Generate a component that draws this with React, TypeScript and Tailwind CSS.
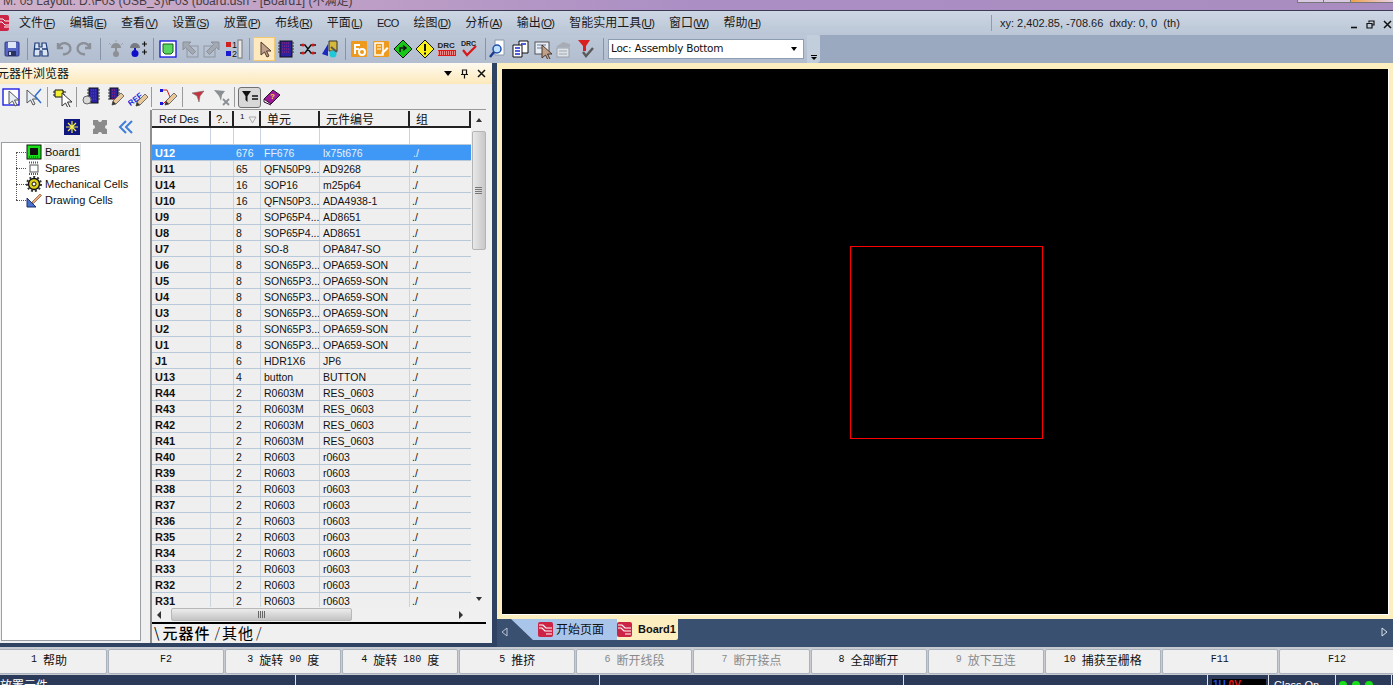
import React from "react";

const CJK = '"Liberation Sans","Noto Sans CJK SC",sans-serif';

const rows: [string, string, string, string][] = [
  ["U11", "65", "QFN50P9...", "AD9268"],
  ["U14", "16", "SOP16", "m25p64"],
  ["U10", "16", "QFN50P3...", "ADA4938-1"],
  ["U9", "8", "SOP65P4...", "AD8651"],
  ["U8", "8", "SOP65P4...", "AD8651"],
  ["U7", "8", "SO-8", "OPA847-SO"],
  ["U6", "8", "SON65P3...", "OPA659-SON"],
  ["U5", "8", "SON65P3...", "OPA659-SON"],
  ["U4", "8", "SON65P3...", "OPA659-SON"],
  ["U3", "8", "SON65P3...", "OPA659-SON"],
  ["U2", "8", "SON65P3...", "OPA659-SON"],
  ["U1", "8", "SON65P3...", "OPA659-SON"],
  ["J1", "6", "HDR1X6", "JP6"],
  ["U13", "4", "button", "BUTTON"],
  ["R44", "2", "R0603M", "RES_0603"],
  ["R43", "2", "R0603M", "RES_0603"],
  ["R42", "2", "R0603M", "RES_0603"],
  ["R41", "2", "R0603M", "RES_0603"],
  ["R40", "2", "R0603", "r0603"],
  ["R39", "2", "R0603", "r0603"],
  ["R38", "2", "R0603", "r0603"],
  ["R37", "2", "R0603", "r0603"],
  ["R36", "2", "R0603", "r0603"],
  ["R35", "2", "R0603", "r0603"],
  ["R34", "2", "R0603", "r0603"],
  ["R33", "2", "R0603", "r0603"],
  ["R32", "2", "R0603", "r0603"],
  ["R31", "2", "R0603", "r0603"],
];

const menus: [string, string][] = [
  ["文件", "F"], ["编辑", "E"], ["查看", "V"], ["设置", "S"], ["放置", "P"], ["布线", "R"], ["平面", "L"],
  ["", "ECO"], ["绘图", "D"], ["分析", "A"], ["输出", "O"], ["智能实用工具", "U"], ["窗口", "W"], ["帮助", "H"],
];

const fkeys: [string, boolean][] = [
  ["1 帮助", true], ["F2", true], ["3 旋转 90 度", true], ["4 旋转 180 度", true], ["5 推挤", true], ["6 断开线段", false],
  ["7 断开接点", false], ["8 全部断开", true], ["9 放下互连", false], ["10 捕获至栅格", true], ["F11", true], ["F12", true],
];

function Ico({ children }: { children: React.ReactNode }) {
  return <svg width="20" height="20" viewBox="0 0 20 20" className="shrink-0">{children}</svg>;
}
function Slot({ children, active }: { children: React.ReactNode; active?: boolean }) {
  return (
    <div className={active ? "w-[22px] h-[24px] flex items-center justify-center bg-[#fde9bd] border border-[#f2c872]" : "w-[22px] h-[24px] flex items-center justify-center"}>
      {children}
    </div>
  );
}
const Cursor = ({ x = 0, y = 0, fill = "#ffffff", stroke = "#444" }: any) => (
  <path transform={`translate(${x} ${y})`} d="M4 1 L4 14 L7.5 11 L10 16 L12 15 L9.5 10 L14 10 Z" fill={fill} stroke={stroke} strokeWidth="1" />
);
const Chip = ({ x = 4, y = 2, w = 11, h = 15 }: any) => (
  <g>
    <rect x={x} y={y} width={w} height={h} fill="#2a22a0" stroke="#111" />
    <path d={`M${x + 2} ${y + 2}h${w - 4}M${x + 2} ${y + 5}h${w - 4}M${x + 2} ${y + 8}h${w - 4}M${x + 2} ${y + 11}h${w - 4}`} stroke="#b0286a" strokeDasharray="1 1" />
    <path d={`M${x - 2} ${y + 2}h2M${x - 2} ${y + 5}h2M${x - 2} ${y + 8}h2M${x - 2} ${y + 11}h2M${x + w} ${y + 2}h2M${x + w} ${y + 5}h2M${x + w} ${y + 8}h2M${x + w} ${y + 11}h2`} stroke="#333" />
  </g>
);
const Pencil = ({ x = 0, y = 0 }: any) => (
  <g transform={`translate(${x} ${y})`}>
    <path d="M7 16 L8 12 L16 4 L19 7 L11 15 Z" fill="#e8c79a" stroke="#555" strokeWidth="0.8" />
    <path d="M7 16 L8 12 L11 15 Z" fill="#333" />
  </g>
);
const RedBoard = () => (
  <div className="w-[15px] h-[15px] rounded-[2px] bg-[#cc2444] flex items-center justify-center shrink-0">
    <svg width="13" height="13" viewBox="0 0 13 13"><path d="M0 2H4L7 5H13M0 5H3L6 8H13M7 11H13" stroke="#fff" strokeWidth="1.2" fill="none" /></svg>
  </div>
);

function MainToolbar() {
  return (
    <div className="h-[28px] w-[820px] bg-gradient-to-b from-[#bcc8d8] to-[#b2becf] flex items-center pl-px rounded-br-[4px]">
      <Slot><Ico><rect x="3" y="3" width="14" height="14" rx="1" fill="#5566c4" stroke="#333a80" /><rect x="6" y="3" width="8" height="6" fill="#dfe6f5" /><rect x="6" y="12" width="8" height="5" fill="#2a3060" /><rect x="7" y="13" width="2" height="3" fill="#c8d0e8" /></Ico></Slot>
      <div className="w-px h-[22px] bg-[#8594a8] ml-[4px] mr-[2px]" />
      <Slot><Ico><path d="M4 4h4v4h3V4h4l2 10v3h-6v-5H9v5H3v-3z" fill="#dbe4f2" stroke="#1c3a78" strokeWidth="1.2" /><path d="M4 10h5M11 10h5" stroke="#1c3a78" strokeWidth="1.5" /></Ico></Slot>
      <Slot><Ico><path d="M5 4v5h5M5.5 9A6 5.5 0 1 1 10 15" fill="none" stroke="#8a8f98" strokeWidth="2.4" /></Ico></Slot>
      <Slot><Ico><path d="M15 4v5h-5M14.5 9A6 5.5 0 1 0 10 15" fill="none" stroke="#8a8f98" strokeWidth="2.4" /></Ico></Slot>
      <div className="w-px h-[22px] bg-[#8594a8] ml-[4px] mr-[4px]" />
      <Slot><Ico><path d="M5 9a5 5 0 0 1 10 0z" fill="#8d9095" /><rect x="9" y="9" width="2" height="4" fill="#8d9095" /><circle cx="10" cy="15" r="3" fill="#8d9095" /><path d="M3 4l2 2M17 4l-2 2M10 1v2" stroke="#9da3ac" /></Ico></Slot>
      <Slot><Ico><path d="M2 9a5 5 0 0 1 10 0z" fill="#777a80" /><rect x="6" y="9" width="2" height="3" fill="#1818c0" /><circle cx="7" cy="14.5" r="3.5" fill="#1010c8" /><path d="M14 5h5M16.5 2.5v5M14 13h5M16.5 10.5v5" stroke="#111" strokeWidth="1.2" /></Ico></Slot>
      <div className="w-px h-[22px] bg-[#8594a8] ml-[4px] mr-[3px]" />
      <Slot><Ico><rect x="2" y="2" width="16" height="16" fill="#fff" stroke="#1010e0" strokeWidth="1.3" /><path d="M5 5h10v8l-2 2H7l-2-2z" fill="#58d860" stroke="#1a5a1a" /></Ico></Slot>
      <Slot><Ico><rect x="7" y="7" width="11" height="11" fill="none" stroke="#8f959e" /><path d="M3 3h8L8.5 5.5l7 7-3 3-7-7L3 11z" fill="#a3a9b2" stroke="#8a8f98" /></Ico></Slot>
      <Slot><Ico><rect x="2" y="7" width="11" height="11" fill="none" stroke="#8f959e" /><path d="M17 3H9l2.5 2.5-7 7 3 3 7-7L17 11z" fill="#a3a9b2" stroke="#8a8f98" /></Ico></Slot>
      <Slot><Ico><rect x="2" y="3" width="5" height="5" fill="#d02020" /><rect x="2" y="12" width="5" height="5" fill="#1a1ad0" /><text x="8" y="9" fontSize="9" fontFamily="Liberation Sans" fill="#111">1</text><text x="8" y="18" fontSize="9" fontFamily="Liberation Sans" fill="#111">2</text><rect x="14" y="1" width="4" height="18" fill="#e8e8e8" stroke="#777" /></Ico></Slot>
      <div className="w-px h-[22px] bg-[#8594a8] ml-[4px] mr-[3px]" />
      <Slot active><Ico><Cursor x={3} y={2} fill="#c0a088" stroke="#4a3a30" /></Ico></Slot>
      <Slot><Ico><Chip x={4} y={2} w={12} h={16} /></Ico></Slot>
      <Slot><Ico><path d="M2 6h5l6 8h5M2 14h5l6-8h5" fill="none" stroke="#111" strokeWidth="1.4" /><circle cx="5" cy="6" r="1.6" fill="#d81818" /><circle cx="15" cy="6" r="1.6" fill="#d81818" /><circle cx="5" cy="14" r="1.6" fill="#d81818" /><circle cx="15" cy="14" r="1.6" fill="#d81818" /></Ico></Slot>
      <Slot><Ico><path d="M9 2h8v10H9z" fill="#d8b838" stroke="#333" /><path d="M2 15L8 5v12z" fill="#1a2ac0" /><circle cx="13" cy="15" r="3.5" fill="#20c8d8" /><path d="M11 8l6 5" stroke="#555" strokeWidth="2" /></Ico></Slot>
      <div className="w-px h-[22px] bg-[#8594a8] ml-[4px] mr-[2px]" />
      <Slot><div className="w-[16px] h-[16px] bg-[#ee9a1e] rounded-[1px] flex items-center justify-center overflow-hidden"><Ico><path d="M5 5h6v2H7v2h3v2H7v4H5z" fill="#fff" /><circle cx="13" cy="13" r="3" fill="none" stroke="#fff" strokeWidth="2" /></Ico></div></Slot>
      <Slot><div className="w-[16px] h-[16px] bg-[#ee9a1e] rounded-[1px] flex items-center justify-center overflow-hidden"><Ico><path d="M4 4h8v12H4z" fill="none" stroke="#fff" strokeWidth="1.5" /><path d="M6 7h4M6 10h4" stroke="#fff" /><path d="M10 14l6-6 1.5 1.5-6 6z" fill="#fff" /></Ico></div></Slot>
      <Slot><Ico><path d="M10 1 L19 10 L10 19 L1 10 Z" fill="#18c818" stroke="#111" /><path d="M7 13V9h5M10 6.5L13 9l-3 2.5" fill="none" stroke="#111" strokeWidth="1.5" /></Ico></Slot>
      <Slot><Ico><path d="M10 1 L19 10 L10 19 L1 10 Z" fill="#f8f018" stroke="#111" /><path d="M10 5v7M10 13.5v2" stroke="#111" strokeWidth="2" /></Ico></Slot>
      <Slot><Ico><text x="0.5" y="9" fontSize="8" fontWeight="700" fontFamily="Liberation Sans" fill="#222">DRC</text><rect x="1" y="11" width="18" height="6" fill="#e01818" /><path d="M1 13h18M1 15h18" stroke="#fff" strokeDasharray="1 1" /></Ico></Slot>
      <Slot><Ico><text x="2" y="7" fontSize="7" fontWeight="700" fontFamily="Liberation Sans" fill="#222">DRC</text><path d="M4 11l4 5 9-9" fill="none" stroke="#d81818" strokeWidth="2.2" /></Ico></Slot>
      <div className="w-px h-[22px] bg-[#8594a8] ml-[5px] mr-px" />
      <Slot><Ico><path d="M7 1h9v15H7z" fill="#fff" stroke="#8899aa" /><circle cx="9" cy="10" r="4" fill="#bfe0ff" stroke="#2050b0" strokeWidth="1.5" /><path d="M6 13l-4 5" stroke="#1a3a90" strokeWidth="2.4" /></Ico></Slot>
      <Slot><Ico><path d="M9 2h9v12H9z" fill="#fff" stroke="#111" /><path d="M3 6h9v12H3z" fill="#fff" stroke="#111" /><path d="M5 9h5M5 12h5M5 15h5M11 5h5" stroke="#1a2ad0" strokeWidth="1.5" /></Ico></Slot>
      <Slot><Ico><rect x="3" y="3" width="14" height="12" fill="#e8eef6" stroke="#555" /><path d="M5 6h9M5 9h6" stroke="#6a7a9a" /><Cursor x={6} y={5} fill="#c0a088" stroke="#4a3a30" /></Ico></Slot>
      <Slot><Ico><path d="M2 8l7-5 7 2v3H2z" fill="#a8adb5" /><rect x="3" y="9" width="12" height="9" fill="#dde2e8" stroke="#9aa0a8" /><path d="M5 12h8M5 15h8" stroke="#a0a6ae" /></Ico></Slot>
      <Slot><Ico><path d="M2 1h12L10 7v5H7V7z" fill="#d82020" /><path d="M7 13l3 4 7-8" fill="none" stroke="#5a5a5a" strokeWidth="2.4" /></Ico></Slot>
      <div className="w-px h-[22px] bg-[#8594a8] ml-[6px] mr-[4px]" />
      <div className="w-[196px] h-[20px] bg-white border border-[#8e9db2] flex items-center pl-[2px] pr-[6px] justify-between text-[10.5px] text-[#111]" style={{ fontFamily: '"DejaVu Sans",sans-serif' }}>
        <span className="tracking-[-0.25px]">Loc: Assembly Bottom</span>
        <span className="w-0 h-0 border-l-[3px] border-r-[3px] border-t-[4px] border-l-transparent border-r-transparent border-t-black" />
      </div>
      <div className="ml-[3px] flex-1 self-stretch bg-[#c3cedc] rounded-tr-[4px] rounded-br-[4px] flex flex-col items-center justify-end pb-[3px]">
        <div className="w-[6px] h-px bg-black mb-px" />
        <span className="w-0 h-0 border-l-[3px] border-r-[3px] border-t-[3px] border-l-transparent border-r-transparent border-t-black" />
      </div>
    </div>
  );
}

function PanelToolbar() {
  return (
    <div className="h-[26px] shrink-0 bg-[#f0f0f0] flex items-center">
      <div className="w-[21px] flex justify-center"><Ico><rect x="2" y="2" width="16" height="16" fill="#fff" stroke="#1010e0" strokeWidth="1.3" /><Cursor x={4} y={3} stroke="#555" fill="#e8eef8" /></Ico></div>
      <div className="w-[22px] ml-[1px] flex justify-center"><Ico><Cursor x={0} y={2} fill="#e8eef8" stroke="#555" /><path d="M18 2l-6 7 6 7" fill="none" stroke="#3070d0" strokeWidth="1.5" /></Ico></div>
      <div className="w-px h-[20px] bg-[#9a9a9a] ml-[3px] mr-[3px]" />
      <div className="w-[22px] flex justify-center"><Ico><path d="M3 3h8v7H3z" fill="#f4ef30" stroke="#111" /><path d="M1 5h2M1 8h2M11 5h3M11 8h2" stroke="#111" /><Cursor x={6} y={5} fill="#fff" stroke="#333" /></Ico></div>
      <div className="w-px h-[20px] bg-[#9a9a9a] ml-[3px] mr-[3px]" />
      <div className="w-[22px] flex justify-center"><Ico><Chip x={8} y={1} w={9} h={15} /><circle cx="6" cy="13" r="4" fill="#d8d8d8" stroke="#666" /></Ico></div>
      <div className="w-[23px] ml-[1px] flex justify-center"><Ico><Chip x={5} y={1} w={8} h={11} /><Pencil x={0} y={2} /></Ico></div>
      <div className="w-[23px] flex justify-center"><Ico><text x="-2" y="14" transform="rotate(-38 8 10)" fontSize="8" fontWeight="700" fontFamily="Liberation Sans" fill="#1a2ae0">REF</text><Pencil x={1} y={3} /></Ico></div>
      <div className="w-px h-[20px] bg-[#9a9a9a] ml-[2px] mr-[3px]" />
      <div className="w-[24px] flex justify-center"><Ico><path d="M4 3h6l3 7-8 8" fill="none" stroke="#d81818" /><rect x="3" y="2" width="3" height="3" fill="#1818d8" /><rect x="3" y="15" width="3" height="3" fill="#1818d8" /><Pencil x={1} y={2} /></Ico></div>
      <div className="w-px h-[20px] bg-[#9a9a9a] ml-[3px] mr-[3px]" />
      <div className="w-[24px] flex justify-center"><Ico><path d="M4 6l12-2-4 5-1 6-2-6z" fill="#c83040" stroke="#707070" strokeWidth="0.6" /></Ico></div>
      <div className="w-[22px] flex justify-center"><Ico><path d="M3 3l11 1-3 4-1 6-2-5z" fill="#8a8f94" /><path d="M12 12l6 6M18 12l-6 6" stroke="#8a8f94" strokeWidth="1.8" /></Ico></div>
      <div className="w-px h-[20px] bg-[#9a9a9a] ml-[2px] mr-[3px]" />
      <div className="w-[23px] h-[21px] bg-[#d8d8d8] border border-[#707070] rounded-[3px] flex items-center justify-center"><svg width="18" height="14" viewBox="0 0 18 14"><path d="M1 1h9L6.5 6v6L4.5 10V6z" fill="#111" /><path d="M11 6h6M11 9h6" stroke="#111" strokeWidth="1.4" /></svg></div>
      <div className="w-[22px] flex justify-center"><Ico><path d="M2 12L11 3l7 5-9 9z" fill="#9c1a98" stroke="#301030" /><path d="M2 12v3l7 3" fill="none" stroke="#301030" /><text x="8" y="12" fontSize="8" fontWeight="700" fontFamily="Liberation Sans" fill="#f4e020">?</text></Ico></div>
    </div>
  );
}

function Tree() {
  const items: [string, React.ReactNode][] = [
    ["Board1", <svg width="16" height="16" viewBox="0 0 16 16"><rect x="1" y="1" width="14" height="14" fill="#18e018" stroke="#111" /><rect x="4" y="4" width="8" height="7" fill="#111" /><path d="M3 13h10" stroke="#111" strokeDasharray="1 1" /></svg>],
    ["Spares", <svg width="16" height="16" viewBox="0 0 16 16"><rect x="4" y="5" width="8" height="7" fill="#fff" stroke="#555" /><path d="M3 2.5h10M3 14h10" stroke="#d82020" strokeWidth="2" strokeDasharray="1 1" /></svg>],
    ["Mechanical Cells", <svg width="16" height="16" viewBox="0 0 16 16"><circle cx="8" cy="8" r="5.5" fill="#e0d018" stroke="#111" strokeWidth="1.4" /><circle cx="8" cy="8" r="7" fill="none" stroke="#333" strokeWidth="2" strokeDasharray="2 2" /><circle cx="8" cy="8" r="2" fill="#fff" stroke="#111" /></svg>],
    ["Drawing Cells", <svg width="16" height="16" viewBox="0 0 16 16"><path d="M1 15V6l9 9z" fill="#4a70c8" stroke="#1a3070" /><path d="M6 10l8-8 1.5 1.5-8 8z" fill="#e8a878" stroke="#704020" strokeWidth="0.6" /></svg>],
  ];
  return (
    <div className="relative w-[140px] flex-1 ml-px bg-white border border-[#9a9fa6] pt-px pl-[14px]">
      <div className="absolute left-[14px] top-[9px] h-[48px] border-l border-dotted border-[#555]" />
      {items.map(([t, icon], i) => (
        <div key={t} className="h-[16px] flex items-center">
          <div className="w-[10px] border-t border-dotted border-[#555]" />
          <div className="w-[16px] h-[16px] flex items-center justify-center shrink-0">{icon}</div>
          <span className={i === 0 ? "ml-[2px] px-px bg-[#efefef] text-[11px] leading-[16px] text-[#111]" : "ml-[2px] px-px text-[11px] leading-[16px] text-[#111]"}>{t}</span>
        </div>
      ))}
    </div>
  );
}

const hc = "h-[17px] flex items-center pt-[2px] border-r-2 border-b-2 border-[#222] text-[11px] leading-none";

function Table() {
  return (
    <div className="w-[334px] flex flex-col flex-1 min-h-0">
      <div className="flex flex-1 min-h-0">
        <div className="w-[319px] flex flex-col min-h-0 overflow-hidden">
          <div className="flex shrink-0 bg-[#f0f0f0] text-[#111]">
            <div className={`${hc} w-[59px] pl-[7px] text-[10.5px]`}>Ref Des</div>
            <div className={`${hc} w-[23px] pl-[5px]`}>?..</div>
            <div className={`${hc} w-[27px] pl-[6px] gap-[4px]`}>
              <span className="text-[8px] -mt-[5px]">1</span>
              <svg width="9" height="8" viewBox="0 0 9 8"><path d="M1 1h7L4.5 7z" fill="none" stroke="#aaa" /></svg>
            </div>
            <div className={`${hc} w-[59px] pl-[6px] text-[12px]`}>单元</div>
            <div className={`${hc} w-[90px] pl-[6px] text-[12px]`}>元件编号</div>
            <div className={`${hc} w-[61px] pl-[6px] text-[12px] border-r-0`}>组</div>
          </div>
          <div className="h-[17px] shrink-0 bg-white flex border-b border-[#b8c9da]">
            <div className="w-[59px] border-r border-[#c8d4e0]" />
            <div className="w-[23px] border-r border-[#c8d4e0]" />
            <div className="w-[27px] border-r border-[#c8d4e0]" />
            <div className="w-[59px] border-r border-[#c8d4e0]" />
            <div className="w-[90px] border-r border-[#c8d4e0]" />
          </div>
          <div className="h-[16px] shrink-0 flex leading-[17px] bg-[#3f98f5] text-[#e6f0fb] text-[10.5px] border-b border-[#b8c9da]">
            <div className="w-[59px] pl-[3px] font-bold text-[11px] text-white">U12</div>
            <div className="w-[23px]" />
            <div className="w-[27px] pl-[2px]">676</div>
            <div className="w-[59px] pl-[3px]">FF676</div>
            <div className="w-[90px] pl-[3px]">lx75t676</div>
            <div className="pl-[3px]">./</div>
          </div>
          {rows.map((r) => (
            <div key={r[0]} className="h-[16px] shrink-0 flex bg-[#efefef] text-[#111] text-[10.5px] leading-[17px] border-b border-[#b8c9da]">
              <div className="w-[59px] pl-[3px] font-bold text-[11px] border-r border-[#c8d4e0]">{r[0]}</div>
              <div className="w-[23px] border-r border-[#c8d4e0]" />
              <div className="w-[27px] pl-[2px] border-r border-[#c8d4e0]">{r[1]}</div>
              <div className="w-[59px] pl-[3px] border-r border-[#c8d4e0] whitespace-nowrap overflow-hidden">{r[2]}</div>
              <div className="w-[90px] pl-[3px] border-r border-[#c8d4e0] whitespace-nowrap">{r[3]}</div>
              <div className="pl-[2px]">./</div>
            </div>
          ))}
        </div>
        <div className="w-[15px] bg-[#f0f0f0] flex flex-col items-center pt-[7px]">
          <span className="w-0 h-0 border-l-[3px] border-r-[3px] border-b-[4px] border-l-transparent border-r-transparent border-b-[#333] shrink-0" />
          <div className="mt-[9px] w-[14px] h-[119px] rounded-[2px] border border-[#b4b4b4] bg-gradient-to-r from-[#e8e8e8] to-[#c8c8c8] flex flex-col items-center justify-center gap-px shrink-0">
            <div className="w-[7px] h-px bg-[#777]" /><div className="w-[7px] h-px bg-[#777]" /><div className="w-[7px] h-px bg-[#777]" /><div className="w-[7px] h-px bg-[#777]" />
          </div>
          <div className="flex-1" />
          <span className="mb-[6px] w-0 h-0 border-l-[3px] border-r-[3px] border-t-[4px] border-l-transparent border-r-transparent border-t-[#333] shrink-0" />
        </div>
      </div>
      <div className="h-[15px] shrink-0 w-[319px] bg-[#f0f0f0] flex items-start pt-px pl-[5px]">
        <span className="mt-[3px] w-0 h-0 border-t-[4px] border-b-[4px] border-r-[4px] border-t-transparent border-b-transparent border-r-[#333]" />
        <div className="ml-[10px] w-[181px] h-[13px] rounded-[2px] border border-[#b8b8b8] bg-gradient-to-b from-[#ececec] to-[#c4c4c4] flex items-center justify-center gap-px">
          <div className="w-px h-[7px] bg-[#666]" /><div className="w-px h-[7px] bg-[#666]" /><div className="w-px h-[7px] bg-[#666]" /><div className="w-px h-[7px] bg-[#666]" />
        </div>
        <span className="mt-[3px] ml-[107px] w-0 h-0 border-t-[4px] border-b-[4px] border-l-[4px] border-t-transparent border-b-transparent border-l-[#333]" />
      </div>
      <div className="h-[18px] shrink-0 border-t-2 border-black flex items-start text-[15px] leading-[17px] text-black pl-[2px] tracking-[1px]" style={{ fontFamily: '"Noto Sans CJK SC",sans-serif' }}>
        <span className="text-[14px]">\</span>
        <span className="px-[2px] font-medium">元器件</span>
        <span className="text-[14px] pl-[2px] font-light">/</span>
        <span className="pl-[1px] pr-[2px]">其他</span>
        <span className="text-[14px] font-light">/</span>
      </div>
    </div>
  );
}

function FKey({ text, on }: { text: string; on: boolean }) {
  const parts = text.split(/([\x00-\x7f]+)/).filter(Boolean);
  return (
    <div className={on ? "flex-1 h-[25px] pb-[3px] bg-[#f0f0f0] border border-[#aab2bc] rounded-[2px] flex items-center justify-center whitespace-pre text-[#111]" : "flex-1 h-[25px] pb-[3px] bg-[#f0f0f0] border border-[#aab2bc] rounded-[2px] flex items-center justify-center whitespace-pre text-[#8a8a8a]"}>
      {parts.map((p, i) =>
        /[\x00-\x7f]/.test(p) ? (
          <span key={i} className="text-[10px]" style={{ fontFamily: '"Liberation Mono",monospace' }}>{p}</span>
        ) : (
          <span key={i} className="text-[12px]" style={{ fontFamily: '"Noto Sans CJK SC",sans-serif' }}>{p}</span>
        )
      )}
    </div>
  );
}

export default function App() {
  return (
    <div className="w-[1393px] h-[685px] overflow-hidden flex flex-col bg-[#9aa9bf] text-[11px]" style={{ fontFamily: CJK }}>
      {/* title */}
      <div className="relative h-[11px] shrink-0 overflow-hidden border-b border-[#3e3a55] bg-gradient-to-r from-[#d0b0c8] via-[#ab8ec4] to-[#a98dc0]">
        <div className="-mt-[6px] pl-[3px] text-[12px] leading-[14px] text-[#222] whitespace-nowrap opacity-80">M. 05 Layout: D:\F03 (USB_3)\F03 (board.dsn - [Board1] (不满足)</div>
        <div className="absolute right-0 top-0 w-[96px] h-[3px] flex border-b border-[#777]">
          <div className="w-[27px] bg-[#d8c8e0] border-r border-l border-[#777]" />
          <div className="w-[27px] bg-[#d8c8e0] border-r border-[#777]" />
          <div className="flex-1 bg-gradient-to-r from-[#f0a040] to-[#e8d0e8]" />
        </div>
      </div>
      {/* menu */}
      <div className="h-[24px] shrink-0 flex items-center bg-gradient-to-b from-[#cdd6e3] to-[#bac6d6] text-[#1a1a1a] text-[12px]">
        <div className="w-[9px] h-[16px] bg-[#cc2444] rounded-r-[2px] flex items-center overflow-hidden shrink-0">
          <svg width="9" height="12" viewBox="0 0 9 12"><path d="M0 2H3L5 4H9M0 5H2L5 8H9M4 10H9" stroke="#fff" fill="none" /></svg>
        </div>
        <div className="flex pl-[2.5px]">
          {menus.map(([t, k]) => (
            <span key={k} className="px-[7.5px] whitespace-nowrap">
              {t}
              {t ? (
                <span className="text-[11px] tracking-[-0.8px]">(<span className="underline">{k}</span>)</span>
              ) : (
                <span className="text-[11px] tracking-[-0.8px]">{k}</span>
              )}
            </span>
          ))}
        </div>
        <div className="flex-1" />
        <div className="w-px h-[16px] bg-[#8d9cb0]" />
        <div className="w-[401px] pl-[8px] flex items-center text-[11px] text-[#1a1a1a] whitespace-pre" style={{ fontFamily: '"Liberation Sans",sans-serif' }}>
          <span>xy: 2,402.85, -708.66{"  "}dxdy: 0, 0{"  "}(th)</span>
          <div className="ml-auto flex items-center gap-[8px] pr-px pt-[3px]">
            <svg width="8" height="8" viewBox="0 0 8 8"><path d="M1 6.5h6" stroke="#111" strokeWidth="1.6" /></svg>
            <svg width="9" height="9" viewBox="0 0 9 9"><path d="M3 2.5V1h5v4H6.5M1 3.5h5V8H1z" fill="none" stroke="#111" strokeWidth="1.2" /></svg>
            <svg width="9" height="9" viewBox="0 0 9 9"><path d="M1 1l7 7M8 1L1 8" stroke="#111" strokeWidth="1.5" /></svg>
          </div>
        </div>
      </div>
      {/* toolbar */}
      <div className="h-[28px] shrink-0 bg-[#9aa9bf]"><MainToolbar /></div>
      {/* main */}
      <div className="h-[584px] shrink-0 flex bg-[#2f4262]">
        <div className="w-[492px] h-[580px] shrink-0 flex flex-col bg-[#f0f0f0] overflow-hidden">
          <div className="h-[21px] shrink-0 bg-gradient-to-b from-[#fffaf0] to-[#fce9ba] flex items-center text-[12px] text-[#111]">
            <span className="-ml-[3px]">元器件浏览器</span>
            <div className="ml-auto flex items-center gap-[8px] pr-[6px]">
              <span className="w-0 h-0 border-l-[4px] border-r-[4px] border-t-[5px] border-l-transparent border-r-transparent border-t-black" />
              <svg width="9" height="10" viewBox="0 0 9 10"><path d="M2.5 1h4v4.5h-4zM1 5.5h7M4.5 5.5V9.5" fill="none" stroke="#111" strokeWidth="1.2" /></svg>
              <svg width="9" height="9" viewBox="0 0 9 9"><path d="M1 1l7 7M8 1L1 8" stroke="#111" strokeWidth="1.5" /></svg>
            </div>
          </div>
          <PanelToolbar />
          <div className="flex-1 min-h-0 flex">
            <div className="w-[142px] flex flex-col pb-[2px]">
              <div className="h-[32px] shrink-0 flex items-center pl-[64px] pt-[1px] gap-[12px]">
                <svg width="16" height="16" viewBox="0 0 16 16"><rect width="16" height="16" fill="#101880" /><path d="M8 2v12M2 8h12M4 4l8 8M12 4l-8 8" stroke="#f4ec50" strokeWidth="1.2" /></svg>
                <svg width="16" height="16" viewBox="0 0 16 16"><path d="M1 1h5a2 2 0 0 0 4 0h5v5a2 2 0 0 0 0 4v5h-5a2 2 0 0 0-4 0H1v-5a2 2 0 0 0 0-4z" fill="#8b8b8b" /></svg>
                <svg width="16" height="16" viewBox="0 0 16 16" className="-ml-[2px]"><path d="M8 2L2 8l6 6M14 2L8 8l6 6" fill="none" stroke="#3f7fd8" strokeWidth="2" /></svg>
              </div>
              <Tree />
            </div>
            <div className="w-[10px] flex justify-end"><div className="w-[2px] bg-[#8e8e8e]" /></div>
            <div className="flex flex-col pb-[3px] pt-[1px] border-t border-[#9a9a9a] -mt-px"><Table /></div>
          </div>
        </div>
        <div className="flex-1 ml-[5px] flex flex-col min-w-0">
          <div className="h-[556px] shrink-0 bg-[#fdeebf] pt-[6px] pb-[4px] pl-[5px] pr-[4px]">
            <div className="h-full bg-black border-r border-b border-white flex items-center justify-center">
              <div className="w-[193px] h-[193px] border border-[#ff0000] ml-[3px] mt-[2px]" />
            </div>
          </div>
          <div className="flex-1 flex items-start bg-[#3a5070] pl-[4px] pr-[5px]">
            <svg width="8" height="10" viewBox="0 0 8 10" className="mt-[8px]"><path d="M6 1L1 5l5 4z" fill="none" stroke="#b8c4d4" /></svg>
            <div className="h-[21px] ml-[2px] w-[106px] bg-[#a9c6ea] flex items-center pl-[27px] gap-[3px] [clip-path:polygon(0_0,100%_0,100%_100%,22px_100%)] text-[12px] text-[#111]">
              <RedBoard /><span>开始页面</span>
            </div>
            <div className="h-[21px] -ml-[6px] w-[67px] bg-[#fdeebf] rounded-b-[2px] flex items-center pl-[6px] gap-[6px] text-[11px] font-bold text-[#111]">
              <RedBoard /><span>Board1</span>
            </div>
            <svg width="8" height="10" viewBox="0 0 8 10" className="ml-auto mt-[8px]"><path d="M2 1l5 4-5 4z" fill="none" stroke="#d8e0ea" /></svg>
          </div>
        </div>
      </div>
      {/* function keys */}
      <div className="h-[28px] shrink-0 flex items-center gap-px bg-[#c8ccd2] -ml-[9px] w-[1404px]">
        {fkeys.map(([t, on]) => <FKey key={t} text={t} on={on} />)}
      </div>
      {/* status */}
      <div className="flex-1 min-h-0 flex bg-[#2a3a58] text-white overflow-hidden">
        <div className="w-[296px] border-r border-[#e0e4ea] pt-[4px] text-[12px] leading-[14px]">放置元件</div>
        <div className="w-[304px] border-r border-[#e0e4ea]" />
        <div className="w-[304px] border-r border-[#e0e4ea]" />
        <div className="w-[304px] border-r border-[#e0e4ea]" />
        <div className="w-[61px] border-r border-[#e0e4ea] pl-[4px] pt-[4px]">
          <div className="bg-black h-[12px] w-[54px] pl-px text-[10px] leading-[11px] font-bold"><span className="text-[#1a50ff]">1U</span> <span className="text-[#f01818]">0V</span></div>
        </div>
        <div className="w-[67px] border-r border-[#e0e4ea] pl-[5px] pt-[4px] text-[11px] leading-[13px] whitespace-nowrap">Class On</div>
        <div className="flex w-[56px] gap-[5px] pl-[3px] pt-[6px] border-r border-[#e0e4ea]">
          <div className="w-[8px] h-[8px] rounded-full bg-[#18e018] shrink-0" />
          <div className="w-[8px] h-[8px] rounded-full bg-[#18e018] shrink-0" />
          <div className="w-[8px] h-[8px] rounded-full bg-[#18e018] shrink-0" />
        </div>
      </div>
    </div>
  );
}
